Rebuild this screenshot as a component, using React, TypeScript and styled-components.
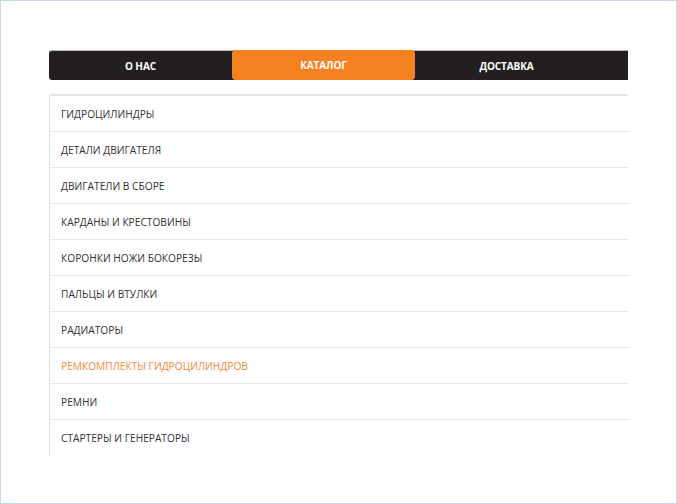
import { createGlobalStyle } from 'styled-components'
import styled from 'styled-components'

const GlobalStyle = createGlobalStyle`
  html, body {
    margin: 0;
    padding: 0;
    background: #ffffff;
  }
  * {
    box-sizing: border-box;
  }
`

const Frame = styled.div`
  width: 677px;
  height: 504px;
  border: 1px solid #c9d9e4;
  padding: 49px 0 0 48px;
  background: #fff;
  overflow: hidden;
`

const Content = styled.div`
  width: 579px;
  overflow: hidden;
`

const Nav = styled.nav`
  display: flex;
  height: 30px;
  background: #231f20;
  border-top: 1px solid #b9b9b9;
  border-radius: 3px 0 0 3px;
`

const Tab = styled.a<{ $active?: boolean }>`
  flex: none;
  width: 183px;
  display: flex;
  align-items: center;
  justify-content: center;
  background: ${(p) => (p.$active ? '#f58220' : 'transparent')};
  border-radius: ${(p) => (p.$active ? '4px' : '0')};
  margin-top: ${(p) => (p.$active ? '-1px' : '0')};
  color: #ffffff;
  font-family: 'Open Sans', 'Liberation Sans', sans-serif;
  font-weight: 700;
  font-size: 10px;
  letter-spacing: -0.1px;
  text-transform: uppercase;
  text-decoration: none;
`

const List = styled.ul`
  list-style: none;
  margin: 14px 0 0;
  padding: 0;
  border-top: 2px solid #e6e6e6;
  border-left: 1px solid #e3e3e3;
`

const Item = styled.li<{ $active?: boolean }>`
  height: 36px;
  display: flex;
  align-items: center;
  padding-left: 11px;
  border-bottom: 1px solid #e6e6e6;
  font-family: 'Open Sans', 'Liberation Sans', sans-serif;
  font-size: 10.2px;
  color: ${(p) => (p.$active ? '#f7893a' : '#333333')};
  text-transform: uppercase;
  &:last-child {
    border-bottom: none;
  }
`

const tabs = ['О нас', 'Каталог', 'Доставка']

const items = [
  'Гидроцилиндры',
  'Детали двигателя',
  'Двигатели в сборе',
  'Карданы и крестовины',
  'Коронки ножи бокорезы',
  'Пальцы и втулки',
  'Радиаторы',
  'Ремкомплекты гидроцилиндров',
  'Ремни',
  'Стартеры и генераторы',
]

const App = () => {
  return (
    <>
      <GlobalStyle />
      <Frame>
        <Content>
          <Nav>
            {tabs.map((t) => (
              <Tab key={t} $active={t === 'Каталог'}>
                {t}
              </Tab>
            ))}
          </Nav>
          <List>
            {items.map((i) => (
              <Item key={i} $active={i === 'Ремкомплекты гидроцилиндров'}>
                {i}
              </Item>
            ))}
          </List>
        </Content>
      </Frame>
    </>
  )
}

export default App
